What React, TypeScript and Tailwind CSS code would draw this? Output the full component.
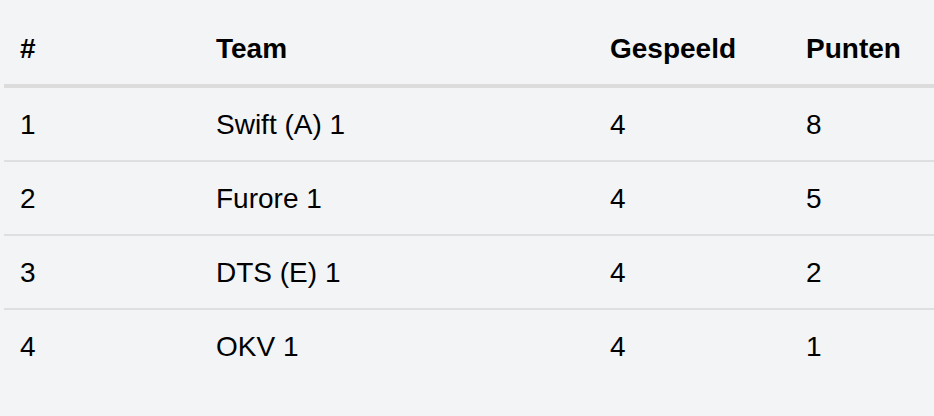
import React from "react";

const rows = [
  { pos: "1", team: "Swift (A) 1", played: "4", points: "8" },
  { pos: "2", team: "Furore 1", played: "4", points: "5" },
  { pos: "3", team: "DTS (E) 1", played: "4", points: "2" },
  { pos: "4", team: "OKV 1", played: "4", points: "1" },
];

export default function App() {
  return (
    <div
      className="w-[934px] h-[416px] bg-[#f3f4f6] pt-[12px] pl-[4px] overflow-hidden text-black"
      style={{ fontFamily: '"Liberation Sans", Arial, Helvetica, sans-serif' }}
    >
      <table className="w-[930px] table-fixed border-collapse text-[28px] leading-[40px]">
        <colgroup>
          <col className="w-[196px]" />
          <col className="w-[394px]" />
          <col className="w-[196px]" />
          <col className="w-[144px]" />
        </colgroup>
        <thead>
          <tr className="border-b-[4px] border-[#dcdcdc]">
            <th className="text-left font-bold px-4 pt-[17px] pb-[15px]">#</th>
            <th className="text-left font-bold px-4 pt-[17px] pb-[15px]">Team</th>
            <th className="text-left font-bold px-4 pt-[17px] pb-[15px]">Gespeeld</th>
            <th className="text-left font-bold px-4 pt-[17px] pb-[15px]">Punten</th>
          </tr>
        </thead>
        <tbody>
          {rows.map((r, i) => (
            <tr
              key={r.pos}
              className={i < rows.length - 1 ? "border-b-[2px] border-[#dedfe1]" : ""}
            >
              <td className="px-4 pt-[17px] pb-[15px] font-normal">{r.pos}</td>
              <td className="px-4 pt-[17px] pb-[15px] font-normal">{r.team}</td>
              <td className="px-4 pt-[17px] pb-[15px] font-normal">{r.played}</td>
              <td className="px-4 pt-[17px] pb-[15px] font-normal">{r.points}</td>
            </tr>
          ))}
        </tbody>
      </table>
    </div>
  );
}
